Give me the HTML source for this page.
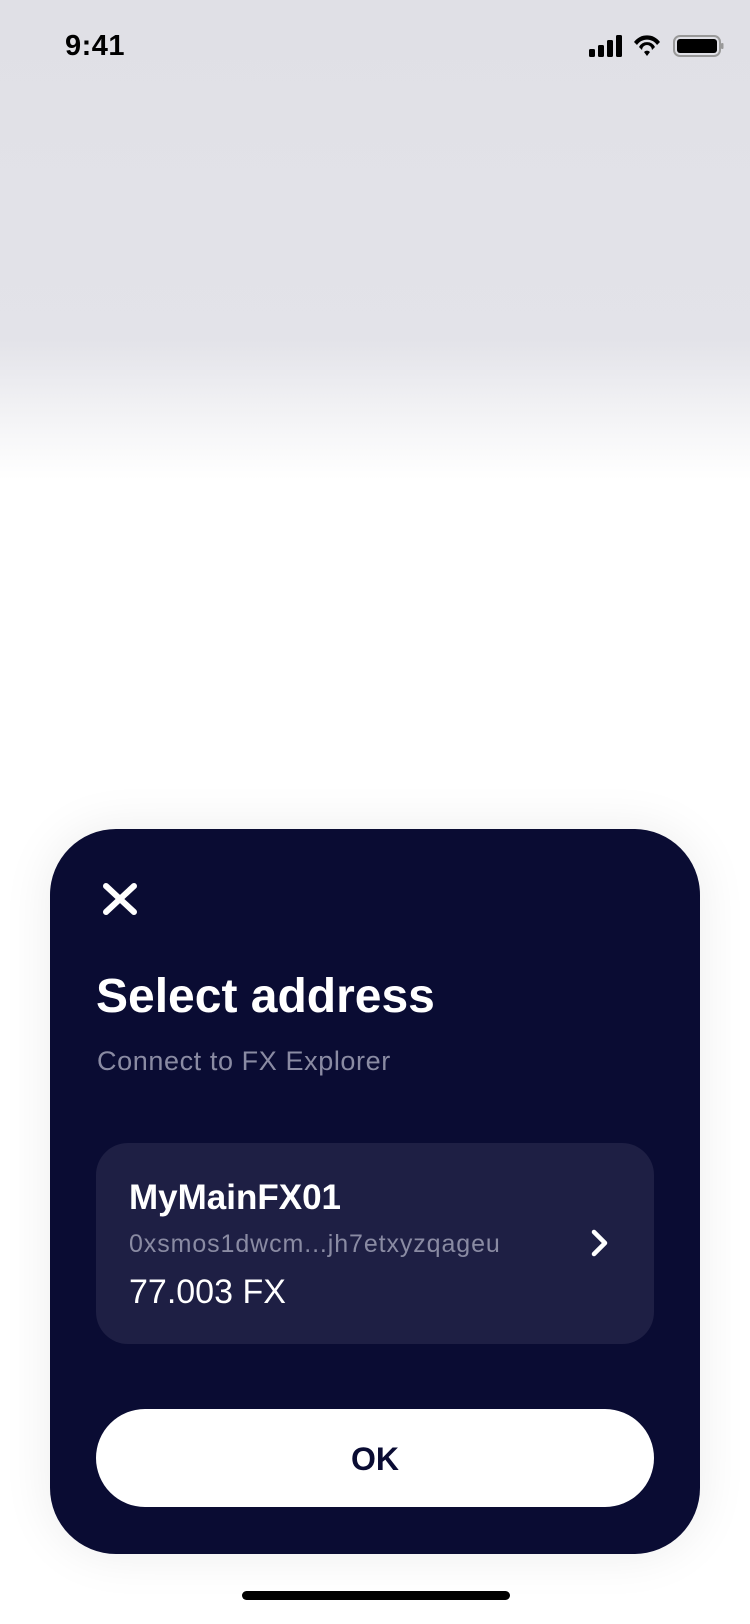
<!DOCTYPE html>
<html><head><meta charset="utf-8"><style>
html,body{margin:0;padding:0}
body{width:750px;height:1624px;position:relative;overflow:hidden;font-family:"Liberation Sans",sans-serif;
background:linear-gradient(#e0e0e6 0px,#e3e3e9 340px,#f4f4f6 420px,#fff 480px,#fff 100%);}
.time{position:absolute;left:65px;top:30px;font-size:29px;font-weight:bold;color:#000;letter-spacing:0.5px}
.card{position:absolute;left:50px;top:829px;width:650px;height:725px;background:#0a0c33;border-radius:66px;box-shadow:0 0 50px rgba(0,0,0,0.08)}
.t{position:absolute;color:#fff;white-space:nowrap;line-height:1}
.box{position:absolute;left:46px;top:314px;width:558px;height:201px;background:#1e1f44;border-radius:32px}
.btn{position:absolute;left:46px;top:580px;width:558px;height:98px;background:#fff;border-radius:49px;text-align:center;line-height:100px;font-size:32px;font-weight:bold;color:#0a0c33}
.home{position:absolute;left:242px;top:1591px;width:268px;height:9px;border-radius:5px;background:#000}
</style></head><body>
<div class="time">9:41</div>
<svg style="position:absolute;left:588px;top:34px" width="136" height="24" viewBox="0 0 136 24">
<rect x="1" y="15" width="6" height="8" rx="1.5"/><rect x="10" y="11" width="6" height="12" rx="1.5"/><rect x="19" y="6" width="6" height="17" rx="1.5"/><rect x="28" y="1" width="6" height="22" rx="1.5"/>
<path d="M46 8 a16 16 0 0 1 26 0 l-3 3 a12 12 0 0 0 -20 0z M51 13 a9 9 0 0 1 16 0 l-3 3 a5 5 0 0 0 -10 0z M56 18 l3 4 l3 -4 a4 4 0 0 0 -6 0z"/>
<rect x="86" y="2" width="46" height="20" rx="6" fill="none" stroke="#999" stroke-width="2"/><rect x="89" y="5" width="40" height="14" rx="3"/><rect x="133" y="9" width="2.5" height="6" rx="1" fill="#999"/>
</svg>
<div class="card">
<svg style="position:absolute;left:52px;top:54px" width="36" height="32" viewBox="0 0 36 32"><path d="M4 3 L32 29 M32 3 L4 29" stroke="#fff" stroke-width="6" stroke-linecap="round"/></svg>
<div class="t" style="left:46px;top:144px;font-size:48px;font-weight:bold">Select address</div>
<div class="t" style="left:47px;top:219px;font-size:27px;color:#8a8ba3;letter-spacing:0.6px">Connect to FX Explorer</div>
<div class="box">
<div class="t" style="left:33px;top:37px;font-size:35px;font-weight:bold">MyMainFX01</div>
<div class="t" style="left:33px;top:89px;font-size:25px;color:#8a8ba3;letter-spacing:0.9px">0xsmos1dwcm...jh7etxyzqageu</div>
<div class="t" style="left:33px;top:132px;font-size:34px">77.003 FX</div>
<svg style="position:absolute;left:494px;top:86px" width="20" height="28" viewBox="0 0 20 28"><path d="M4 3 L15 14 L4 25" fill="none" stroke="#fff" stroke-width="4.5" stroke-linecap="round" stroke-linejoin="round"/></svg>
</div>
<div class="btn">OK</div>
</div>
<div class="home"></div>
</body></html>
